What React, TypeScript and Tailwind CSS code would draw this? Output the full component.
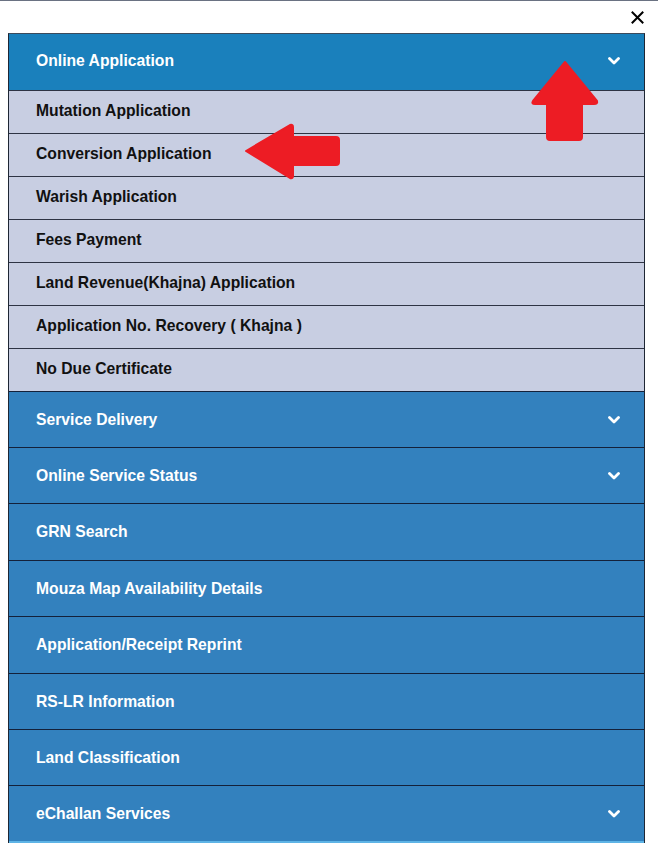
import React from 'react';

const subItems = [
  'Mutation Application',
  'Conversion Application',
  'Warish Application',
  'Fees Payment',
  'Land Revenue(Khajna) Application',
  'Application No. Recovery ( Khajna )',
  'No Due Certificate',
];

const mainItems = [
  { label: 'Service Delivery', chevron: true, h: 'h-[56px]' },
  { label: 'Online Service Status', chevron: true, h: 'h-[56px]' },
  { label: 'GRN Search', chevron: false, h: 'h-[57px]' },
  { label: 'Mouza Map Availability Details', chevron: false, h: 'h-[56px]' },
  { label: 'Application/Receipt Reprint', chevron: false, h: 'h-[57px]' },
  { label: 'RS-LR Information', chevron: false, h: 'h-[56px]' },
  { label: 'Land Classification', chevron: false, h: 'h-[56px]' },
  { label: 'eChallan Services', chevron: true, h: 'h-[56px]' },
];

const Chevron = () => (
  <svg width="12" height="8" viewBox="0 0 12 8" className="mr-[24px]">
    <path d="M1.5 1.5 L6 6 L10.5 1.5" fill="none" stroke="white" strokeWidth="2.8" strokeLinecap="round" strokeLinejoin="round" />
  </svg>
);

export default function App() {
  return (
    <div className="relative w-[658px] h-[854px] bg-white font-['Liberation_Sans',Arial,sans-serif] font-bold text-[15.7px]">
      <div className="h-px bg-gray-500" />
      <div className="flex justify-end h-[32px] items-center pr-[14px]">
        <svg width="13" height="13" viewBox="0 0 13 13">
          <path d="M1.5 1.5 L11.5 11.5 M11.5 1.5 L1.5 11.5" stroke="black" strokeWidth="2" strokeLinecap="square" />
        </svg>
      </div>
      <div className="ml-[8px] w-[637px] border-x border-[#1e2634] border-t border-t-[#3b4a5c]">
        <div className="h-[56px] bg-[#1a80bc] flex items-center justify-between pl-[27px] pb-[3px] text-white">
          <span>Online Application</span>
          <Chevron />
        </div>
        {subItems.map((s) => (
          <div key={s} className="h-[43px] bg-[#c8cee2] border-t border-[#2e3444] flex items-center pl-[27px] pb-[3px] text-[#111]">
            {s}
          </div>
        ))}
        {mainItems.map((m) => (
          <div key={m.label} className={`${m.h} bg-[#3381be] border-t border-[#14213a] flex items-center justify-between pl-[27px] text-white`}>
            <span>{m.label}</span>
            {m.chevron && <Chevron />}
          </div>
        ))}
        <div className="h-[2px] bg-[#5eb4e6]" />
      </div>
      <svg className="absolute left-0 top-0 pointer-events-none" width="658" height="854" viewBox="0 0 658 854">
        <path
          d="M565 62 L597 101 Q598 104 594 104 L582 104 L582 137 Q582 140 579 140 L550 140 Q547 140 547 137 L547 104 L535 104 Q531 104 533 101 Z"
          fill="#ed1c24"
          stroke="#ed1c24"
          strokeWidth="2"
          strokeLinejoin="round"
        />
        <path
          d="M246 151 L290 125 Q293 124 293 127 L293 137 L336 137 Q339 137 339 140 L339 162 Q339 165 336 165 L293 165 L293 176 Q293 179 290 178 Z"
          fill="#ed1c24"
          stroke="#ed1c24"
          strokeWidth="2"
          strokeLinejoin="round"
        />
      </svg>
    </div>
  );
}
